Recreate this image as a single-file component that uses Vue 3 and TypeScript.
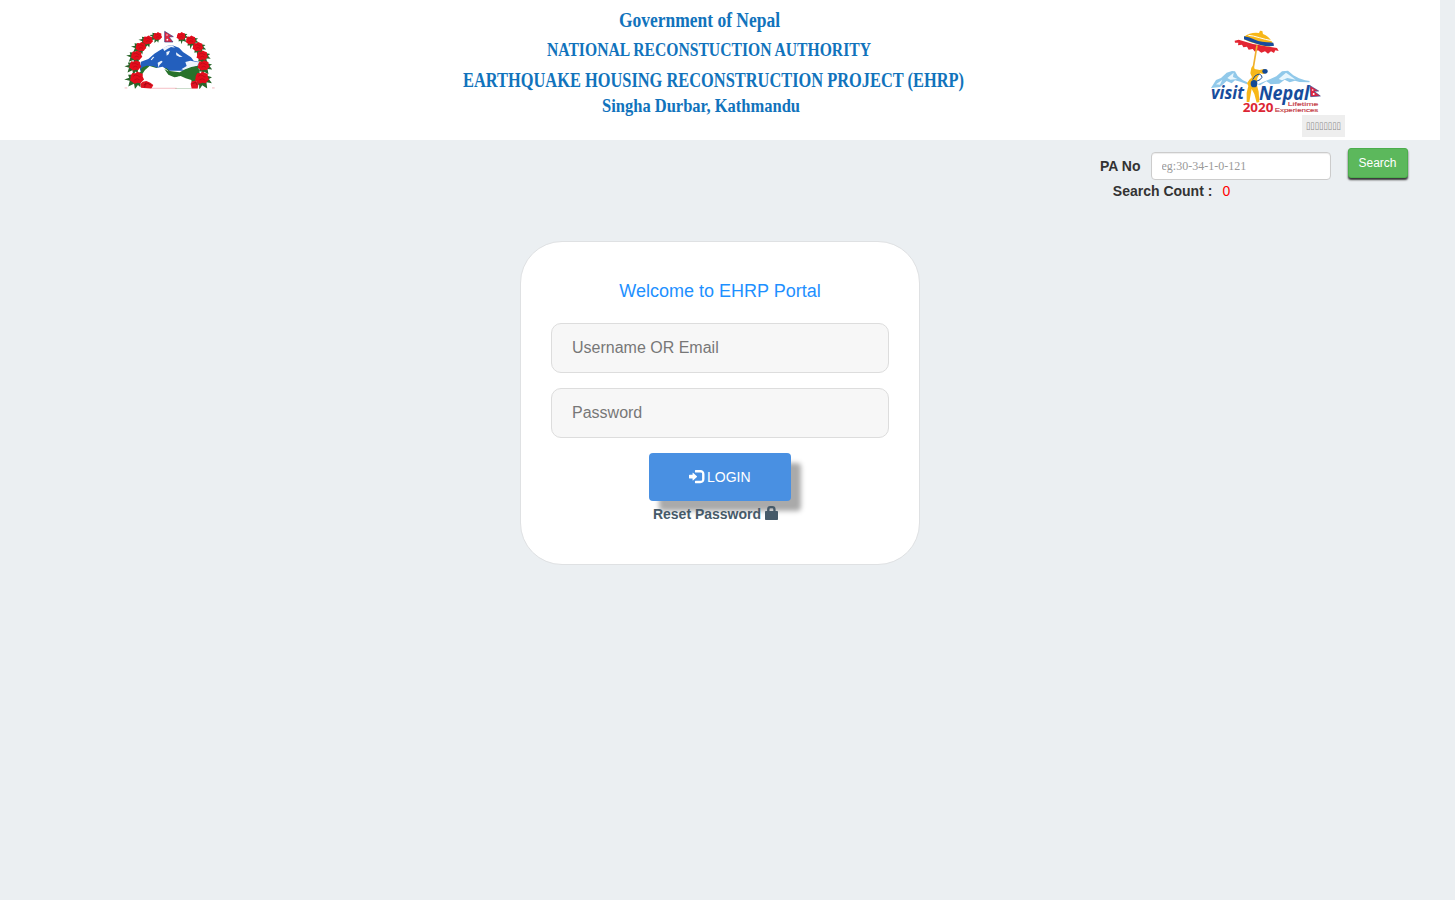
<script setup lang="ts">
import { ref } from 'vue'

interface HeadingLine { text: string; x: number; y: number; size: number; width: number }
interface Rose { x: number; y: number; s: number; a: number }

const heading: HeadingLine[] = [
  { text: 'Government of Nepal', x: 159, y: 26.6, size: 20.5, width: 161 },
  { text: 'NATIONAL RECONSTUCTION AUTHORITY', x: 87, y: 56, size: 19, width: 324 },
  { text: 'EARTHQUAKE HOUSING RECONSTRUCTION PROJECT (EHRP)', x: 3, y: 87.2, size: 21, width: 501 },
  { text: 'Singha Durbar, Kathmandu', x: 142, y: 112.2, size: 19.5, width: 198 },
]

const leftRoses: Rose[] = [
  { x: 127, y: 48, s: 0.85, a: 50 }, { x: 98, y: 60, s: 0.95, a: 45 },
  { x: 77, y: 80, s: 1, a: 45 }, { x: 64, y: 106, s: 1.05, a: 42 },
  { x: 60, y: 136, s: 1.1, a: 38 }, { x: 65, y: 173, s: 1.3, a: 35 },
]
const roses: Rose[] = [
  ...leftRoses,
  ...leftRoses.map((r) => ({ x: 325 - r.x, y: r.y, s: r.s, a: -r.a })),
]

const paNo = ref('')
const searchCount = ref(0)
const username = ref('')
const password = ref('')
</script>

<template>
  <div class="page">
    <header class="banner">
      <svg class="emblem" viewBox="0 0 330 240" aria-label="Emblem of Nepal">
        <defs>
          <clipPath id="emblem-base"><rect x="0" y="0" width="330" height="206" /></clipPath>
        </defs>
        <g clip-path="url(#emblem-base)">
          <path d="M75 138 78 125 100 117 118 101 132 92 158 77 172 76 192 83 204 96 228 112 236 122 250 125 250 152 75 152Z" fill="#235fbd" />
          <path d="M143 84 158 77 172 76 180 83 168 81 157 87 148 93ZM107 119 114 110 118 111 110 121ZM128 128 139 122 143 125 134 134 130 142ZM154 96 165 92 161 103 155 107ZM183 97 195 106 203 110 194 111 184 106ZM211 126 226 122 250 127 248 137 229 144 207 150 199 148 215 138Z" fill="#edf4fc" />
          <path d="M72 158 87 146 93 137 113 138 138 147 154 144 165 153 194 157 211 148 229 141 249 137 255 163 243 185 229 206 181 206 175 184 154 173 121 167 100 162 80 176Z" fill="#28722b" />
          <path d="M78 168 90 150 104 138 124 144 143 140 158 151 164 163 183 170 197 168 212 175 229 180 232 206 111 206 98 191 76 184Z" fill="#fff" />
          <path d="M77 148 84 141 98 137 90 146 80 158ZM148 147 163 155 168 163 190 170 178 172 160 164Z" fill="#28722b" />
          <g v-for="(rose, i) in roses" :key="i" :transform="`translate(${rose.x} ${rose.y}) scale(${rose.s})`">
            <path :transform="`rotate(${rose.a})`" d="M-10-2-20 6-14 10-21 20-9 15-4 28 3 15 12 24 12 12 20 13 12 2Z" fill="#28662a" />
            <path d="M-14-3-10-11-3-10 2-14 8-11 14-9 14-2 17 4 13 8 9 13 2 12-5 14-10 10-16 6-14 2Z" fill="#e30d1b" />
            <path d="M-8-3Q-3-9 2-5T9-2M-5 5Q1 0 7 5" fill="none" stroke="#b80a19" stroke-width="2" />
          </g>
          <path d="M78 203 76 192 83 185 94 183 106 188 115 195 109 206ZM230 206 227 191 231 184 243 182 251 190 248 206Z" fill="#df1422" />
          <path d="M86 195 98 190 109 196M92 188 89 202M232 191 242 187 246 195" fill="none" stroke="#a80816" stroke-width="3" />
          <path d="M29 204h8M291 204h8M110 205h75" stroke="#ec8792" stroke-width="2" />
        </g>
        <path d="M149 34 175 50 162 51 174 66H149Z" fill="#df2741" stroke="#344285" stroke-width="2" />
        <circle cx="156" cy="45" r="2" fill="#fff" /><circle cx="157" cy="59" r="2.7" fill="#fff" />
      </svg>

      <svg class="heading" width="520" height="125" viewBox="0 0 520 125">
        <text v-for="line in heading" :key="line.text" :x="line.x" :y="line.y" :font-size="line.size" :textLength="line.width" lengthAdjust="spacingAndGlyphs">{{ line.text }}</text>
      </svg>

      <svg class="visit" viewBox="0 0 450 285" aria-label="Visit Nepal 2020">
        <path d="M33 204 48 180 63 174 80 158 96 153 105 154 113 168 129 181 142 187 141 193 121 185 105 181 95 190 80 183 60 201ZM173 193 211 177 229 169 246 154 264 152 280 166 297 175 315 181 329 183 328 187 298 186 285 182 269 187 254 179 238 191 212 193 199 184 180 196Z" fill="#91c9ea" />
        <path d="M82 174 101 158 99 171 112 177 91 179ZM236 177 258 158 276 171 287 179 262 174 246 181ZM48 193 67 179 60 194Z" fill="#e8f6fd" />
        <path d="M104 62 116 59 159 72 212 81 231 84 236 93 226 91 222 99 213 94 204 101 195 94 184 98 174 91 165 95 158 87 146 89 141 80 130 82 126 74 114 76 115 68 105 68Z" fill="#e32632" />
        <path d="M132 50Q151 36 177 39L180 32 187 33 189 42Q211 50 221 76 211 82 187 77L150 66 132 58Z" fill="#f7b718" />
        <path d="M132 49Q150 52 165 59 184 67 220 68L222 77Q207 81 182 75 156 68 132 58Z" fill="#174c9d" />
        <path d="M145 46Q159 47 178 53T216 62" fill="none" stroke="#fff" stroke-width="3" />
        <path d="M171 76 159 148" stroke="#efb02e" stroke-width="5" />
        <path d="M154 143 160 136 164 147 179 150 192 147 198 157 191 162 180 160 172 174 170 193 176 215 178 246 170 248 163 222 155 207 148 246 140 246 140 218 145 198 141 190 148 179 156 172 151 160Z" fill="#f7b718" />
        <ellipse cx="195" cy="154" rx="8" ry="7" fill="#144994" />
        <ellipse cx="162" cy="191" rx="10" ry="11" fill="#144994" />
        <path d="M158 179Q164 165 174 163T186 172Q183 180 169 184" fill="none" stroke="#144994" stroke-width="3" />
        <g class="visit-name">
          <text x="33" y="238" font-size="54" textLength="99" lengthAdjust="spacingAndGlyphs">visit</text>
          <text x="177" y="240" font-size="60" textLength="151" lengthAdjust="spacingAndGlyphs">Nepal</text>
        </g>
        <text class="visit-year" x="128" y="276" font-size="38" textLength="92" lengthAdjust="spacingAndGlyphs">2020</text>
        <text class="visit-tag" x="263" y="257" font-size="18" textLength="92" lengthAdjust="spacingAndGlyphs">Lifetime</text>
        <text class="visit-tag" x="224" y="275" font-size="18" textLength="131" lengthAdjust="spacingAndGlyphs">Experiences</text>
        <path d="M330 197 356 213 342 214 361 228 332 230Z" fill="#df2240" stroke="#344c91" stroke-width="2" />
        <circle cx="338" cy="210" r="2.5" fill="#fff" /><circle cx="341" cy="222" r="3" fill="#fff" />
      </svg>
      <button class="language" type="button">
        <svg width="43" height="22"><text x="4" y="13.5" textLength="35" lengthAdjust="spacingAndGlyphs">▯▯▯▯▯▯▯▯</text></svg>
      </button>
    </header>

    <form class="search" @submit.prevent>
      <div class="search-row">
        <label for="pa">PA No</label>
        <input id="pa" v-model="paNo" placeholder="eg:30-34-1-0-121" />
        <button type="submit">Search</button>
      </div>
      <div class="count"><b>Search Count :</b><span>{{ searchCount }}</span></div>
    </form>

    <main class="card">
      <h1>Welcome to EHRP Portal</h1>
      <form @submit.prevent>
        <input v-model="username" class="field" placeholder="Username OR Email" />
        <input v-model="password" class="field" type="password" placeholder="Password" />
        <button class="login" type="submit">
          <svg width="15" height="14" viewBox="0 0 1260 1176"><path transform="translate(0 1105) scale(1 -1)" d="M550 1100h400q165 0 257.5-92.5t92.5-257.5v-400q0-165-92.5-257.5t-257.5-92.5h-400q-21 0-35.5 14.5t-14.5 35.5v100q0 21 14.5 35.5t35.5 14.5h450q41 0 70.5 29.5t29.5 70.5v500q0 41-29.5 70.5t-70.5 29.5h-450q-21 0-35.5 14.5t-14.5 35.5v100q0 21 14.5 35.5t35.5 14.5zM338 867l324-284q16-14 16-33t-16-33l-324-284q-16-14-27-9t-11 26v150h-250q-21 0-35.5 14.5t-14.5 35.5v200q0 21 14.5 35.5t35.5 14.5h250v150q0 21 11 26t27-9z" /></svg>
          <span>LOGIN</span>
        </button>
      </form>
      <a class="reset">Reset Password
        <svg width="13" height="14" viewBox="0 0 13 14"><path fill-rule="evenodd" d="M2.1 5V3.3Q2.3 0 5.2 0H7.4Q10.4 0 10.6 3.3V5H12.2Q13 5 13 5.8V13.2Q13 14 12.2 14H.8Q0 14 0 13.2V5.8Q0 5 .8 5ZM4.5 5H8.3V3.4Q8.3 2.2 7.3 2.2H5.4Q4.5 2.2 4.5 3.4Z" /></svg>
      </a>
    </main>
  </div>
</template>

<style>
html, body { margin: 0; background: #ebeff2; }
</style>

<style scoped>
* { box-sizing: border-box; }
.page { width: 1440px; height: 900px; overflow: hidden; font: 14px/20px "Liberation Sans", Arial, sans-serif; color: #333; }
.banner { position: relative; display: flex; align-items: flex-start; height: 140px; background: #fff; }
.emblem { flex: none; width: 110px; height: 80px; margin: 20px 0 0 115px; }
.heading { flex: none; margin-left: 235px; overflow: visible; fill: #1173bc; font-family: "Liberation Serif", "Times New Roman", serif; font-weight: 700; }
.visit { flex: none; width: 150px; height: 95px; margin: 20px 0 0 220px; }
.visit-name { fill: #174c9c; font-family: "Open Sans", sans-serif; font-style: italic; font-weight: 700; }
.visit-year { fill: #dc2635; font-family: "Open Sans", sans-serif; font-weight: 700; }
.visit-tag { fill: #c43742; font-family: "Liberation Sans", sans-serif; font-weight: 400; stroke: #c43742; stroke-width: .4px; }
.language { position: absolute; left: 1302px; top: 115px; width: 43px; height: 22px; padding: 0; border: 0; background: #eee; }
.language svg { display: block; overflow: visible; fill: #888; font: 10px "DejaVu Sans", sans-serif; }
.search { height: 101px; padding: 8px 32px 0 0; }
.search-row { display: flex; justify-content: flex-end; height: 33px; }
.search-row label { margin: 8px 10.5px 0 0; font-weight: 700; }
.search-row input { width: 180px; height: 28px; margin: 4px 17px 0 0; padding: 0 9.5px; border: 1px solid #ccc; border-radius: 4px; background: #fff; box-shadow: inset 0 1px 1px rgba(0,0,0,.075); font: 12px "Liberation Serif", serif; outline: 0; }
.search-row input::placeholder { color: #999; }
.search-row button { width: 60px; height: 30px; padding: 0 1px 0 0; border: 1px solid #4cae4c; border-radius: 3px; background: #5cb85c; color: #fff; font: 12px/18px "Liberation Sans", sans-serif; box-shadow: 0 2px 2px #333; }
.count { display: flex; gap: 10px; margin-left: 1112.8px; }
.count span { color: #f00; }
.card { display: flex; flex-direction: column; align-items: center; width: 400px; height: 324px; margin: 0 auto; padding: 39px 30px 0; border: 1px solid #dfe1e3; border-radius: 42px; background: #fff; }
.card h1 { margin: 0 0 22px; color: #1e90ff; font-size: 18px; font-weight: 400; line-height: 20px; }
.card form { display: flex; flex-direction: column; align-items: center; gap: 15px; width: 338px; }
.field { width: 100%; height: 50px; padding: 0 20px; border: 1px solid #ddd; border-radius: 10px; background: #f7f7f7; font: 16px "Liberation Sans", sans-serif; outline: 0; }
.field::placeholder { color: #777; }
.login { display: flex; align-items: center; justify-content: center; gap: 3px; width: 142px; height: 48px; padding: 0 .5px 0 0; border: 0; border-radius: 4px; background: #4990e2; color: #fff; font: 14px/20px "Liberation Sans", sans-serif; box-shadow: 10px 10px 5px #aaa; }
.login svg { overflow: visible; fill: #fff; }
.reset { position: relative; display: flex; gap: 4px; margin: 3px 9px 0 0; color: #465a69; font-weight: 700; white-space: nowrap; }
.reset svg { margin-top: 2px; fill: currentColor; }
</style>
